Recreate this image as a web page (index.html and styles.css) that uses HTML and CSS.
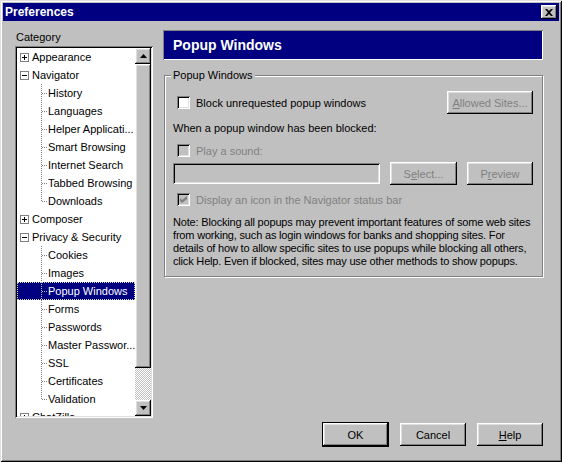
FILE: index.html
```html
<!DOCTYPE html>
<html>
<head>
<meta charset="utf-8">
<link rel="stylesheet" href="styles.css">
</head>
<body>
<div class="window">
  <div class="titlebar">
    <span class="title">Preferences</span>
    <button class="close raised"><svg width="8" height="7" viewBox="0 0 8 7"><path d="M0 0h2l2 2 2-2h2L5 3.5 8 7H6L4 5 2 7H0l3-3.5z" fill="#000"/></svg></button>
  </div>
  <div class="content">
    <div class="main">
      <div class="sidebar">
        <div class="cat-label">Category</div>
        <div class="tree">
          <div class="rows">
            <div class="row top"><svg class="exp" width="9" height="9" viewBox="0 0 9 9"><rect x=".5" y=".5" width="8" height="8" fill="#fff" stroke="#808080"/><path d="M2 4.5h5M4.5 2v5" stroke="#000"/></svg>Appearance</div>
            <div class="row top"><svg class="exp" width="9" height="9" viewBox="0 0 9 9"><rect x=".5" y=".5" width="8" height="8" fill="#fff" stroke="#808080"/><path d="M2 4.5h5" stroke="#000"/></svg>Navigator</div>
            <div class="row child">History</div>
            <div class="row child">Languages</div>
            <div class="row child">Helper Applicati...</div>
            <div class="row child">Smart Browsing</div>
            <div class="row child">Internet Search</div>
            <div class="row child">Tabbed Browsing</div>
            <div class="row child last">Downloads</div>
            <div class="row top"><svg class="exp" width="9" height="9" viewBox="0 0 9 9"><rect x=".5" y=".5" width="8" height="8" fill="#fff" stroke="#808080"/><path d="M2 4.5h5M4.5 2v5" stroke="#000"/></svg>Composer</div>
            <div class="row top"><svg class="exp" width="9" height="9" viewBox="0 0 9 9"><rect x=".5" y=".5" width="8" height="8" fill="#fff" stroke="#808080"/><path d="M2 4.5h5" stroke="#000"/></svg>Privacy &amp; Security</div>
            <div class="row child">Cookies</div>
            <div class="row child">Images</div>
            <div class="row child selected">Popup Windows</div>
            <div class="row child">Forms</div>
            <div class="row child">Passwords</div>
            <div class="row child">Master Passwor...</div>
            <div class="row child">SSL</div>
            <div class="row child">Certificates</div>
            <div class="row child last">Validation</div>
            <div class="row top"><svg class="exp" width="9" height="9" viewBox="0 0 9 9"><rect x=".5" y=".5" width="8" height="8" fill="#fff" stroke="#808080"/><path d="M2 4.5h5M4.5 2v5" stroke="#000"/></svg>ChatZilla</div>
          </div>
          <div class="vscroll">
            <div class="sbtn raised"><svg width="7" height="4" viewBox="0 0 7 4"><path d="M3.5 0L7 4H0z" fill="#000"/></svg></div>
            <div class="thumb raised"></div>
            <div class="track"></div>
            <div class="sbtn raised"><svg width="7" height="4" viewBox="0 0 7 4"><path d="M0 0h7L3.5 4z" fill="#000"/></svg></div>
          </div>
        </div>
      </div>
      <div class="panel">
        <div class="panel-header">Popup Windows</div>
        <div class="group">
          <div class="legend">Popup Windows</div>
          <div class="line first">
            <div class="check"><span class="box"></span>Block unrequested popup windows</div>
            <button class="btn raised allowed" disabled><u>A</u>llowed Sites...</button>
          </div>
          <div class="text when">When a popup window has been blocked:</div>
          <div class="check disabled sound"><span class="box"></span>Play a sound:</div>
          <div class="line soundrow">
            <span class="field"></span>
            <button class="btn raised select" disabled>S<u>e</u>lect...</button>
            <button class="btn raised preview" disabled>P<u>r</u>eview</button>
          </div>
          <div class="check disabled icon"><span class="box"><svg width="7" height="7" viewBox="0 0 7 7"><path d="M0 2l2 2 5-4v3L2 7 0 5z" fill="#808080"/></svg></span>Display an icon in the Navigator status bar</div>
          <p class="note">Note: Blocking all popups may prevent important features of some web sites<br>from working, such as login windows for banks and shopping sites. For<br>details of how to allow specific sites to use popups while blocking all others,<br>click Help. Even if blocked, sites may use other methods to show popups.</p>
        </div>
      </div>
    </div>
    <div class="footer">
      <button class="btn raised default">OK</button>
      <button class="btn raised">Cancel</button>
      <button class="btn raised"><u>H</u>elp</button>
    </div>
  </div>
</div>
</body>
</html>
```
FILE: styles.css
```css
* { box-sizing: border-box; }
body {
  margin: 0;
  background: #c0c0c0;
  font-family: "Liberation Sans", Arial, sans-serif;
  font-size: 11px;
  color: #000;
}
.window {
  width: 562px;
  height: 462px;
  padding: 3px;
  background: #c0c0c0;
  box-shadow: inset 1px 1px #dfdfdf, inset -1px -1px #000, inset 2px 2px #fff, inset -2px -2px #808080;
  display: flex;
  flex-direction: column;
}
.raised {
  background: #c0c0c0;
  border: none;
  box-shadow: inset -1px -1px #000, inset 1px 1px #fff, inset -2px -2px #808080, inset 2px 2px #dfdfdf;
}
.titlebar {
  height: 18px;
  background: #000080;
  color: #fff;
  display: flex;
  align-items: center;
  justify-content: space-between;
  padding: 0 2px;
}
.title { font-weight: bold; font-size: 12px; }
.close {
  width: 16px;
  height: 14px;
  padding: 0;
  display: flex;
  align-items: center;
  justify-content: center;
}
.content {
  flex: 1;
  padding: 9px 16px 0 12px;
  display: flex;
  flex-direction: column;
}
.main { display: flex; gap: 10px; }
.sidebar { width: 138px; }
.cat-label { height: 14px; line-height: 14px; margin-bottom: 2px; padding-left: 1px; }
.tree {
  height: 372px;
  display: flex;
  background: #fff;
  padding: 2px;
  box-shadow: inset 1px 1px #808080, inset -1px -1px #fff, inset 2px 2px #000, inset -2px -2px #dfdfdf;
}
.rows { flex: 1; overflow: hidden; }
.row {
  height: 18px;
  line-height: 18px;
  white-space: nowrap;
  display: flex;
  align-items: center;
}
.row.top { padding-left: 3px; }
.exp { margin-right: 3px; flex: none; }
.row.child {
  padding-left: 31px;
  background-image: repeating-linear-gradient(to bottom, #808080 0 1px, transparent 1px 2px), repeating-linear-gradient(to right, #808080 0 1px, transparent 1px 2px);
  background-size: 1px 100%, 6px 1px;
  background-position: 24px 0, 25px 9px;
  background-repeat: no-repeat;
}
.row.child.last { background-size: 1px 10px, 6px 1px; }
.row.selected {
  background-color: #000080;
  color: #fff;
  background-image: repeating-linear-gradient(to bottom, #c0c0c0 0 1px, transparent 1px 2px), repeating-linear-gradient(to right, #c0c0c0 0 1px, transparent 1px 2px);
  outline: 1px dotted #dcdca0;
  outline-offset: -1px;
}
.vscroll { width: 16px; display: flex; flex-direction: column; }
.sbtn { height: 16px; display: flex; align-items: center; justify-content: center; }
.thumb { height: 304px; }
.track {
  flex: 1;
  background: repeating-conic-gradient(#fff 0 25%, #c0c0c0 0 50%) 0 0 / 2px 2px;
}
.panel { width: 380px; }
.panel-header {
  height: 30px;
  background: #000080;
  color: #fff;
  font-weight: bold;
  font-size: 14px;
  display: flex;
  align-items: center;
  padding-left: 10px;
  box-shadow: inset 1px 1px #808080, inset -1px -1px #fff;
}
.group {
  margin: 15px 0 0 1px;
  border: 1px solid #808080;
  box-shadow: inset 1px 1px #fff, 1px 1px #fff;
  padding: 0 9px 8px 8px;
}
.legend {
  width: fit-content;
  margin: -7px 0 0 -2px;
  padding: 0 2px;
  line-height: 13px;
  height: 13px;
  background: #c0c0c0;
}
.line { display: flex; align-items: center; }
.first { margin-top: 9px; height: 23px; justify-content: space-between; }
.check {
  display: flex;
  align-items: center;
  height: 13px;
  padding-left: 4px;
  white-space: nowrap;
}
.box {
  width: 13px;
  height: 13px;
  margin-right: 6px;
  background: #fff;
  box-shadow: inset 1px 1px #808080, inset -1px -1px #fff, inset 2px 2px #000, inset -2px -2px #dfdfdf;
  display: flex;
  align-items: center;
  justify-content: center;
}
.check.disabled { color: #808080; }
.check.disabled .box { background: #c0c0c0; }
.text { line-height: 13px; height: 13px; }
.when { margin-top: 8px; }
.sound { margin-top: 9px; }
.soundrow { margin-top: 5px; height: 23px; }
.field {
  width: 207px;
  height: 21px;
  background: #c0c0c0;
  box-shadow: inset 1px 1px #808080, inset -1px -1px #fff, inset 2px 2px #000, inset -2px -2px #dfdfdf;
}
.btn {
  font-family: inherit;
  font-size: 11px;
  color: #000;
  height: 23px;
  padding: 0;
}
.btn:disabled { color: #808080; }
.allowed { width: 86px; }
.select { width: 67px; margin-left: 10px; }
.preview { width: 66px; margin-left: 10px; }
.icon { margin-top: 8px; }
.note {
  margin: 10px 0 0 0;
  line-height: 13px;
  white-space: nowrap;
  letter-spacing: -0.18px;
}
.footer {
  display: flex;
  justify-content: flex-end;
  align-items: center;
  gap: 11px;
  margin-top: 4px;
  height: 25px;
}
.footer .btn { width: 66px; }
.footer .default {
  width: 67px;
  height: 25px;
  border: 1px solid #000;
}
```
